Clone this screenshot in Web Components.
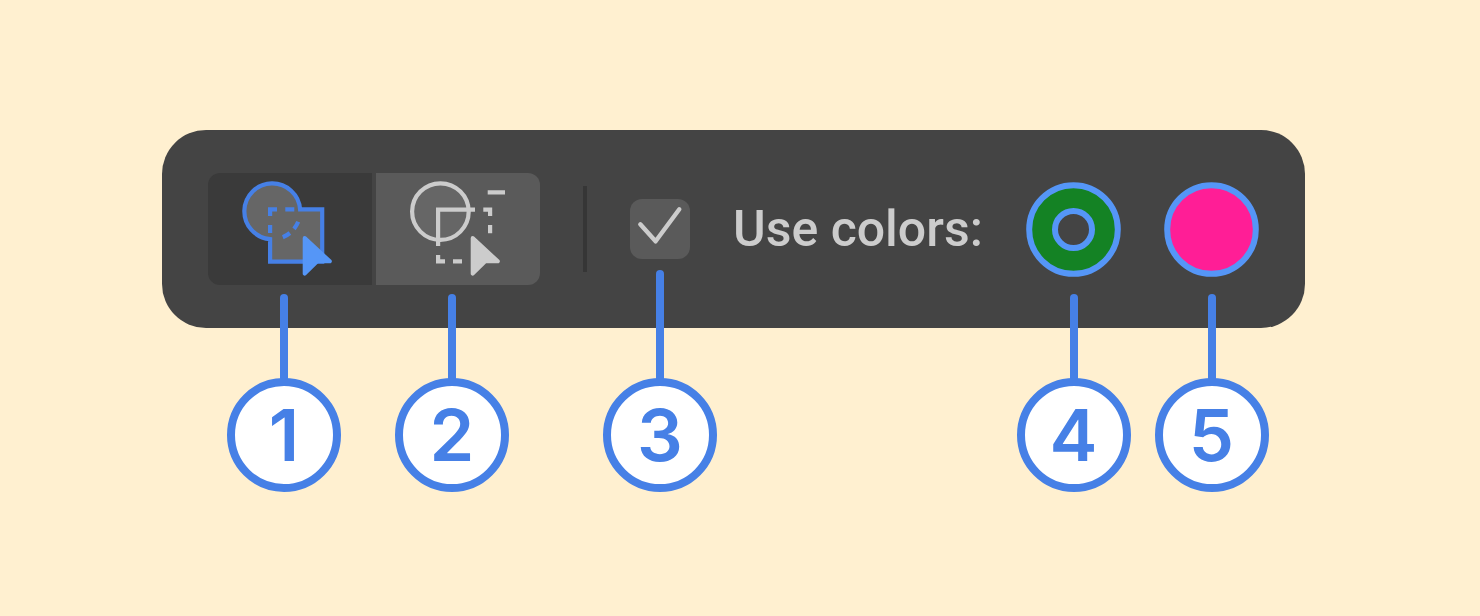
<!DOCTYPE html>
<html lang="en">
<head>
<meta charset="utf-8">
<title>Toolbar</title>
<style>
  body {
    margin: 0;
    padding: 130px 175px 288px 162px;
    background: #fff0d0;
    font-family: Inter, "Liberation Sans", sans-serif;
  }
</style>
</head>
<body>
<tool-bar>
  <tool-segments>
    <tool-segment pressed label="Merge shapes">
      <svg width="104" height="112" viewBox="0 0 104 112" fill="none" stroke="#4680e6" stroke-width="4.2">
        <path fill="#666" d="M68.1 36.4H90.2V88.7H38.1V66.1A27.9 27.9 0 1 1 68.1 36.4Z"/>
        <path d="M38.1 43V36.4H45M53.3 36.4H62.3M38.1 52V60M66.2 48.8A27.9 27.9 0 0 1 62 55.9M57.9 60A27.9 27.9 0 0 1 50.8 64.2"/>
        <path fill="#5596f7" stroke="#5596f7" stroke-width="4" stroke-linejoin="round" d="M72.7 65L97.8 88.3H85.2L72.7 100.7Z"/>
      </svg>
      <call-out slot="callout">1</call-out>
    </tool-segment>
    <tool-segment label="Delete segments">
      <svg width="104" height="112" viewBox="0 0 104 112" fill="none" stroke="#ccc" stroke-width="4.2">
        <circle cx="40.4" cy="38.6" r="28.3" fill="#666"/>
        <path d="M38.1 73V36.6H75M83.3 36.6H90.1V43M90.1 52V60.3M87.7 19.3H105M38.1 82V88.3H45M53 88.3H62"/>
        <path fill="#ccc" stroke-width="4" stroke-linejoin="round" d="M72.7 65L97.8 88.3H85.2L72.7 100.7Z"/>
      </svg>
      <call-out slot="callout">2</call-out>
    </tool-segment>
  </tool-segments>
  <tool-divider></tool-divider>
  <tool-check>
    Use colors:
    <call-out slot="callout" long>3</call-out>
  </tool-check>
  <color-swatch label="Stroke color" color="#148224" ring>
    <call-out slot="callout">4</call-out>
  </color-swatch>
  <color-swatch label="Fill color" color="#ff1e96">
    <call-out slot="callout">5</call-out>
  </color-swatch>
</tool-bar>

<script>
const define = (name, html, setup) => {
  const template = document.createElement("template");
  template.innerHTML = html;
  customElements.define(name, class extends HTMLElement {
    constructor() {
      super();
      this.attachShadow({ mode: "open" });
      this.shadowRoot.appendChild(template.content.cloneNode(true));
    }

    connectedCallback() {
      if (setup) setup(this, this.shadowRoot);
    }
  });
};

define("tool-bar", `
  <style>
    :host {
      display: flex;
      align-items: stretch;
      gap: 43px;
      height: 198px;
      padding: 0 46px;
      border-radius: 44px;
      background: #444;
    }
  </style>
  <slot></slot>
`);

define("tool-segments", `
  <style>
    :host { display: flex; flex: none; gap: 4px; }
    ::slotted(:first-child) { --radius: 12px 0 0 12px; }
    ::slotted(:last-child) { --radius: 0 12px 12px 0; }
  </style>
  <slot></slot>
`);

// the callout sits under the icon, which is left of the segment's middle
define("tool-segment", `
  <style>
    :host {
      --anchor: 76px;
      position: relative;
      display: flex;
      align-items: center;
    }
    button {
      display: flex;
      width: 164px;
      padding: 0 0 0 24px;
      border: 0;
      border-radius: var(--radius);
      background: #5a5a5a;
    }
    button[aria-pressed="true"] { background: #3a3a3a; }
    ::slotted(svg) { display: block; overflow: visible; }
  </style>
  <button type="button"><slot></slot></button>
  <slot name="callout"></slot>
`, (host, root) => {
  const button = root.querySelector("button");
  button.setAttribute("aria-label", host.getAttribute("label"));
  button.setAttribute("aria-pressed", host.hasAttribute("pressed"));
  button.addEventListener("click", () => {
    host.parentElement.querySelectorAll("tool-segment").forEach((item) => {
      item.shadowRoot.querySelector("button").setAttribute("aria-pressed", item === host);
    });
  });
});

define("tool-divider", `
  <style>
    :host {
      display: block;
      flex: none;
      align-self: center;
      width: 4px;
      height: 86px;
      background: #363636;
    }
  </style>
`);

define("tool-check", `
  <style>
    :host { display: flex; flex: 1; align-items: stretch; gap: 43px; }
    .box { position: relative; display: grid; align-content: center; }
    input, svg { grid-area: 1 / 1; width: 60px; height: 60px; }
    input {
      appearance: none;
      margin: 0;
      border-radius: 12px;
      background: #5a5a5a;
    }
    svg { visibility: hidden; pointer-events: none; }
    input:checked + svg { visibility: visible; }
    label {
      align-self: center;
      color: #ccc;
      font-family: Roboto, "Liberation Sans", sans-serif;
      font-size: 50px;
      font-weight: 500;
      line-height: 60px;
      white-space: nowrap;
    }
  </style>
  <div class="box">
    <input id="check" type="checkbox" checked>
    <svg viewBox="0 0 60 60" fill="none" stroke="#ccc" stroke-width="4.4" stroke-linecap="round" stroke-linejoin="round">
      <path d="M10.3 25.3L25.6 42.3L49.3 10.3"/>
    </svg>
    <slot name="callout"></slot>
  </div>
  <label for="check"><slot></slot></label>
`);

define("color-swatch", `
  <style>
    :host { position: relative; display: flex; flex: none; align-items: center; }
    button { padding: 0; border: 0; border-radius: 50%; background: none; }
    svg { display: block; }
    .hole { display: none; }
    :host([ring]) .hole { display: inline; }
  </style>
  <button type="button">
    <svg width="95" height="95" viewBox="0 0 95 95" stroke="#5596f7" stroke-width="6">
      <circle class="disc" cx="47.5" cy="47.5" r="44.3"/>
      <circle class="hole" cx="47.5" cy="47.5" r="18.5" fill="#444"/>
    </svg>
  </button>
  <slot name="callout"></slot>
`, (host, root) => {
  root.querySelector("button").setAttribute("aria-label", host.getAttribute("label"));
  root.querySelector(".disc").setAttribute("fill", host.getAttribute("color"));
});

// numbered marker hanging below the bar, with a stem up to its control
define("call-out", `
  <style>
    :host {
      position: absolute;
      bottom: -164px;
      left: var(--anchor, 50%);
      display: flex;
      flex-direction: column;
      align-items: center;
      transform: translateX(-50%);
      color: #4680e6;
      pointer-events: none;
    }
    .stem {
      width: 8px;
      height: 88px;
      margin-bottom: -4px;
      border-radius: 4px;
      background: currentColor;
    }
    :host([long]) .stem { height: 112px; }
    .disc {
      box-sizing: border-box;
      width: 114px;
      height: 114px;
      border: 8px solid;
      border-radius: 50%;
      background: #fff;
      font-size: 72px;
      font-weight: 600;
      line-height: 98px;
      text-align: center;
    }
  </style>
  <div class="stem"></div>
  <div class="disc"><slot></slot></div>
`);
</script>
</body>
</html>
